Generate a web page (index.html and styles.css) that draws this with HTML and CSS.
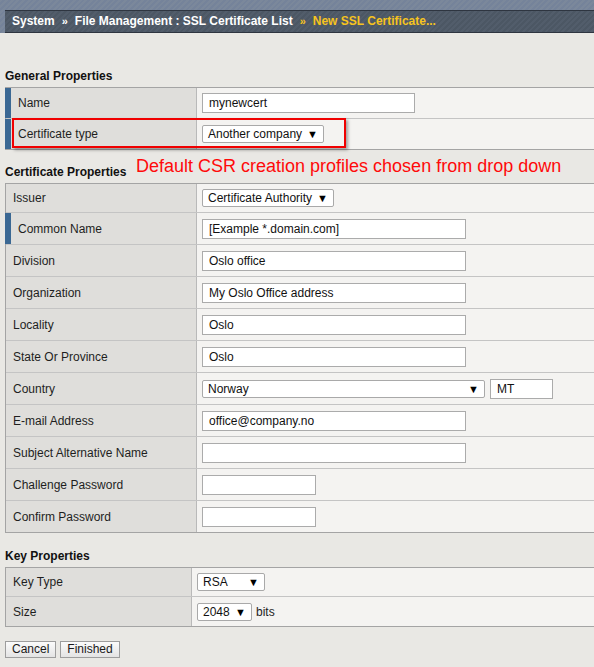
FILE: index.html
```html
<!DOCTYPE html>
<html>
<head>
<meta charset="utf-8">
<title>New SSL Certificate</title>
<link rel="stylesheet" href="styles.css">
</head>
<body>
<div class="topbar">
  <div class="crumbs">
    <span>System</span><span class="sep">»</span><span>File Management : SSL Certificate List</span><span class="sep cur">»</span><span class="cur">New SSL Certificate...</span>
  </div>
</div>

<div class="content">
  <h2 class="sec first">General Properties</h2>
  <div class="form general">
    <div class="row"><div class="label req">Name</div><div class="value"><span class="input w213">mynewcert</span></div></div>
    <div class="row"><div class="label req">Certificate type</div><div class="value"><span class="select w122"><span>Another company</span><span class="arr">▼</span></span></div></div>
  </div>

  <h2 class="sec">Certificate Properties</h2>
  <div class="form cert">
    <div class="row"><div class="label">Issuer</div><div class="value"><span class="select w132"><span>Certificate Authority</span><span class="arr">▼</span></span></div></div>
    <div class="row"><div class="label req">Common Name</div><div class="value"><span class="input w264">[Example *.domain.com]</span></div></div>
    <div class="row"><div class="label">Division</div><div class="value"><span class="input w264">Oslo office</span></div></div>
    <div class="row"><div class="label">Organization</div><div class="value"><span class="input w264">My Oslo Office address</span></div></div>
    <div class="row"><div class="label">Locality</div><div class="value"><span class="input w264">Oslo</span></div></div>
    <div class="row"><div class="label">State Or Province</div><div class="value"><span class="input w264">Oslo</span></div></div>
    <div class="row"><div class="label">Country</div><div class="value"><span class="select w283"><span>Norway</span><span class="arr">▼</span></span><span class="input w63 mt">MT</span></div></div>
    <div class="row"><div class="label">E-mail Address</div><div class="value"><span class="input w264">office@company.no</span></div></div>
    <div class="row"><div class="label">Subject Alternative Name</div><div class="value"><span class="input w264"></span></div></div>
    <div class="row"><div class="label">Challenge Password</div><div class="value"><span class="input w114"></span></div></div>
    <div class="row"><div class="label">Confirm Password</div><div class="value"><span class="input w114"></span></div></div>
  </div>

  <h2 class="sec keysec">Key Properties</h2>
  <div class="form key">
    <div class="row"><div class="label">Key Type</div><div class="value"><span class="select w68"><span>RSA</span><span class="arr">▼</span></span></div></div>
    <div class="row"><div class="label">Size</div><div class="value"><span class="select w55"><span>2048</span><span class="arr">▼</span></span><span class="unit">bits</span></div></div>
  </div>

  <div class="buttons">
    <button class="btn">Cancel</button><button class="btn">Finished</button>
  </div>
</div>

<div class="callout-box"></div>
<div class="callout-text">Default CSR creation profiles chosen from drop down</div>
</body>
</html>
```

FILE: styles.css
```css
* { box-sizing: border-box; }

body {
  margin: 0;
  background: #e9e8e4;
  font-family: "Liberation Sans", Arial, sans-serif;
  font-size: 12px;
  color: #1c1c1c;
  overflow: hidden;
  position: relative;
  height: 667px;
}

.topbar {
  background: repeating-linear-gradient(135deg, #7b889b 0 2px, #75839a 2px 4px);
  padding: 10px 0 0 5px;
}

.crumbs {
  height: 23px;
  line-height: 21px;
  border-top: 1px solid #2e3540;
  border-bottom: 1px solid #2e3540;
  background: repeating-linear-gradient(135deg, #525d6b 0 2px, #4c5764 2px 4px);
  color: #ffffff;
  font-weight: bold;
  font-size: 12px;
  padding-left: 7px;
  white-space: nowrap;
}

.crumbs .sep { margin: 0 7px 0 7px; font-size: 11px; }
.crumbs .cur { color: #f7c41e; }

.content { padding-left: 5px; }

.sec {
  margin: 14px 0 3px;
  font-size: 12px;
  font-weight: bold;
  line-height: 16px;
  color: #111;
}
.sec.first { margin-top: 35px; }
.sec.keysec { margin-top: 15px; }

.form {
  width: 589px;
  border-top: 1px solid #a4a4a4;
  border-bottom: 1px solid #a4a4a4;
  border-left: 1px solid #a4a4a4;
}

.row {
  display: flex;
  height: 30px;
}
.row + .row { border-top: 1px solid #c4c4c4; height: 31px; }

.cert .row { height: 32px; }
.cert .row:first-child { height: 28px; }
.key .row { height: 28px; }
.key .row + .row { height: 30px; }

.label {
  width: 191px;
  flex: none;
  background: #dfdedb;
  border-right: 1px solid #b9b9b9;
  padding-left: 7px;
  display: flex;
  align-items: center;
  color: #1e1e1e;
}
.label.req {
  border-left: 6px solid #3b6893;
  margin-left: -1px;
  width: 192px;
}
.key .label { width: 186px; }

.value {
  flex: 1;
  background: #f4f3f1;
  padding-left: 5px;
  display: flex;
  align-items: center;
}

.input {
  display: inline-block;
  height: 20px;
  line-height: 18px;
  border: 1px solid #ababab;
  background: #fff;
  padding: 0 6px;
  color: #111;
  white-space: nowrap;
  overflow: hidden;
}

.select {
  display: inline-flex;
  align-items: center;
  justify-content: space-between;
  height: 18px;
  border: 1px solid #a9a9a9;
  border-radius: 2px;
  background: #fff;
  padding: 0 5px 0 5px;
  color: #111;
  white-space: nowrap;
}
.select .arr { font-size: 11px; color: #000; }

.w213 { width: 213px; }
.w264 { width: 264px; }
.w114 { width: 114px; }
.w63 { width: 63px; }
.w122 { width: 122px; }
.w132 { width: 132px; }
.w283 { width: 283px; }
.w68 { width: 68px; }
.w55 { width: 55px; }

.mt { margin-left: 5px; }
.unit { margin-left: 4px; color: #1e1e1e; }

.buttons {
  margin-top: 14px;
  display: flex;
  gap: 4px;
}
.btn {
  height: 17px;
  padding: 0 6px;
  font-family: "Liberation Sans", Arial, sans-serif;
  font-size: 12px;
  color: #1a1a1a;
  border: 1px solid #9d9d9d;
  background: linear-gradient(#fbfbfb, #e4e4e4);
  line-height: 15px;
}

.callout-box {
  position: absolute;
  left: 12px;
  top: 118px;
  width: 334px;
  height: 30px;
  border: 2px solid #f00000;
  box-shadow: 2px 2px 3px rgba(0,0,0,0.35);
}
.callout-text {
  position: absolute;
  left: 136px;
  top: 156px;
  font-size: 18px;
  line-height: 21px;
  color: #ff0a0a;
  white-space: nowrap;
}
```
